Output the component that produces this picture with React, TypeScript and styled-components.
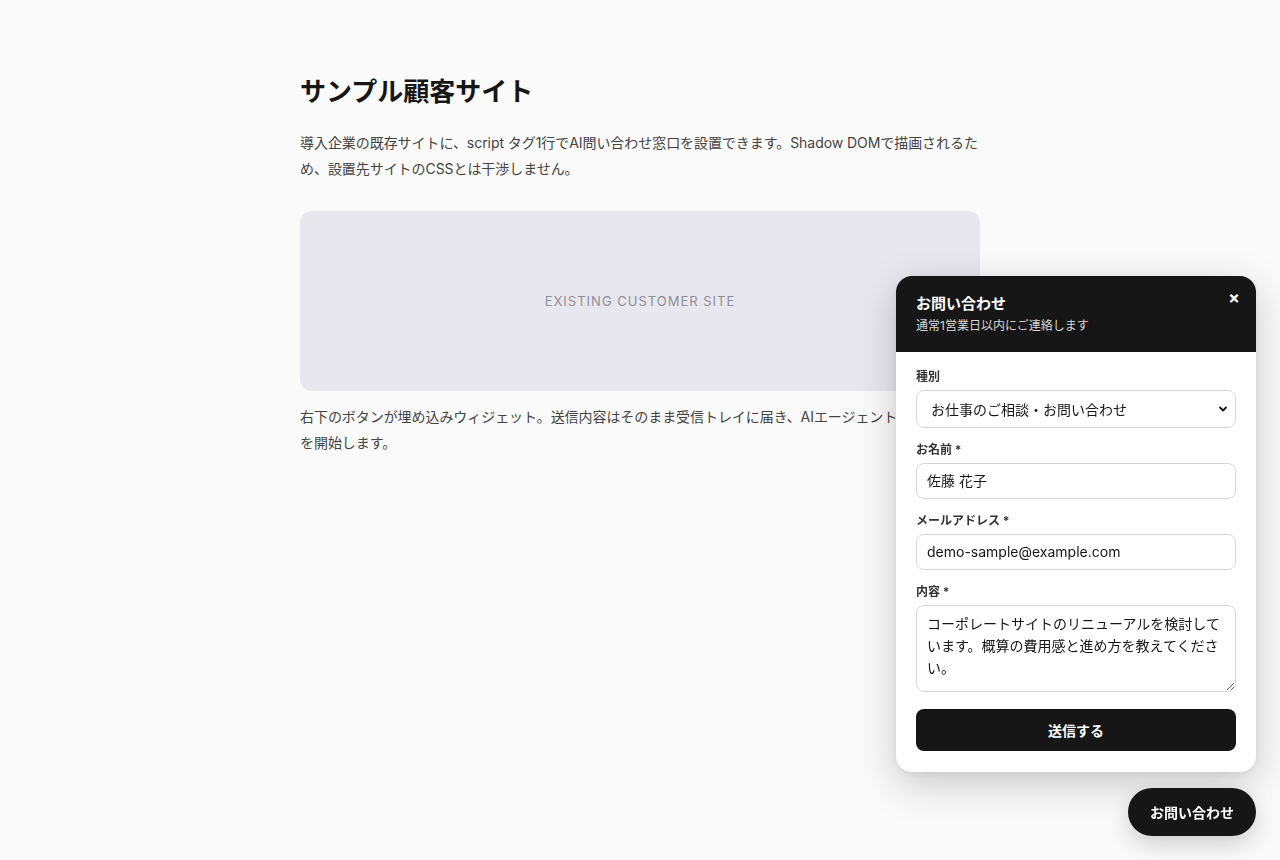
import React from 'react';
import styled, { createGlobalStyle } from 'styled-components';

const GlobalStyle = createGlobalStyle`
  html, body {
    margin: 0;
    padding: 0;
    background: #fafafa;
  }
  body {
    font-family: Inter, "Noto Sans CJK JP", sans-serif;
    color: #161616;
    -webkit-font-smoothing: antialiased;
  }
  * {
    box-sizing: border-box;
  }
`;

const Page = styled.main`
  width: 680px;
  margin: 0 auto;
  padding-top: 75px;
`;

const Title = styled.h1`
  margin: 0;
  font-size: 26px;
  line-height: 34px;
  font-weight: 700;
  color: #161616;
`;

const Lead = styled.p<{ gap: number }>`
  margin: ${(p) => p.gap}px 0 0;
  font-size: 14px;
  line-height: 26px;
  letter-spacing: -0.06px;
  color: #444;
`;

const Placeholder = styled.div`
  margin-top: 29px;
  height: 180px;
  border-radius: 12px;
  background: #e8e7ed;
  display: flex;
  align-items: center;
  justify-content: center;
  font-size: 13px;
  letter-spacing: 1px;
  color: #8f8f99;
`;

const Widget = styled.div`
  position: fixed;
  right: 24px;
  bottom: 24px;
  display: flex;
  flex-direction: column;
  align-items: flex-end;
  gap: 16px;
`;

const Panel = styled.section`
  width: 360px;
  border-radius: 16px;
  background: #fff;
  overflow: hidden;
  box-shadow: 0 12px 40px rgba(0, 0, 0, 0.2), 0 2px 8px rgba(0, 0, 0, 0.06);
`;

const Header = styled.header`
  position: relative;
  height: 76px;
  padding: 18px 20px 0;
  background: #161616;
  color: #fff;
`;

const HeaderTitle = styled.div`
  font-size: 15px;
  line-height: 20px;
  font-weight: 700;
`;

const HeaderSub = styled.div`
  margin-top: 4px;
  font-size: 12px;
  line-height: 16px;
  color: #d6d6d6;
`;

const CloseButton = styled.button`
  position: absolute;
  top: 13px;
  right: 14px;
  width: 16px;
  height: 18px;
  padding: 0;
  border: none;
  background: none;
  color: #fff;
  font-family: Inter, sans-serif;
  font-size: 17px;
  font-weight: 700;
  line-height: 18px;
  cursor: pointer;
`;

const Form = styled.form`
  display: flex;
  flex-direction: column;
  gap: 14px;
  padding: 17px 20px 21px;
`;

const Field = styled.label`
  display: flex;
  flex-direction: column;
  gap: 5px;
`;

const FieldLabel = styled.span`
  font-size: 12px;
  line-height: 16px;
  font-weight: 700;
  color: #333;
`;

const controlBase = `
  width: 100%;
  border: 1px solid #d6d6d6;
  border-radius: 8px;
  background: #fff;
  font-family: Inter, "Noto Sans CJK JP", sans-serif;
  font-size: 14px;
  color: #161616;
  outline: none;
`;

const SelectWrap = styled.div`
  position: relative;

  svg {
    position: absolute;
    right: 8px;
    top: 14px;
    pointer-events: none;
  }
`;

const Select = styled.select`
  ${controlBase}
  appearance: none;
  height: 38px;
  padding: 0 30px 0 14px;
`;

const Input = styled.input`
  ${controlBase}
  height: 36px;
  padding: 0 10px 2px;
`;

const TextArea = styled.textarea`
  ${controlBase}
  height: 87px;
  padding: 7px 10px;
  line-height: 22px;
  resize: vertical;
`;

const Submit = styled.button`
  margin-top: 3px;
  height: 42px;
  border: none;
  border-radius: 8px;
  background: #161616;
  color: #fff;
  font-family: Inter, "Noto Sans CJK JP", sans-serif;
  font-size: 14px;
  font-weight: 700;
  cursor: pointer;
`;

const Launcher = styled.button`
  height: 48px;
  padding: 0 22px;
  border: none;
  border-radius: 24px;
  background: #161616;
  color: #fff;
  font-family: Inter, "Noto Sans CJK JP", sans-serif;
  font-size: 14px;
  font-weight: 700;
  box-shadow: 0 8px 24px rgba(0, 0, 0, 0.18);
  cursor: pointer;
`;

function Chevron() {
  return (
    <svg width="10" height="10" viewBox="0 0 10 10" fill="none">
      <path d="M2 3.5 5 6.5 8 3.5" stroke="#161616" strokeWidth="1.8" strokeLinecap="round" strokeLinejoin="round" />
    </svg>
  );
}

export default function App() {
  return (
    <>
      <GlobalStyle />
      <Page>
        <Title>サンプル顧客サイト</Title>
        <Lead gap={21}>
          導入企業の既存サイトに、script タグ1行でAI問い合わせ窓口を設置できます。Shadow DOMで描画されるため、設置先サイトのCSSとは干渉しません。
        </Lead>
        <Placeholder>EXISTING CUSTOMER SITE</Placeholder>
        <Lead gap={13}>
          右下のボタンが埋め込みウィジェット。送信内容はそのまま受信トレイに届き、AIエージェントが一次対応を開始します。
        </Lead>
      </Page>

      <Widget>
        <Panel>
          <Header>
            <HeaderTitle>お問い合わせ</HeaderTitle>
            <HeaderSub>通常1営業日以内にご連絡します</HeaderSub>
            <CloseButton type="button" aria-label="閉じる">×</CloseButton>
          </Header>
          <Form onSubmit={(e) => e.preventDefault()}>
            <Field>
              <FieldLabel>種別</FieldLabel>
              <SelectWrap>
                <Select defaultValue="work">
                  <option value="work">お仕事のご相談・お問い合わせ</option>
                  <option value="other">その他</option>
                </Select>
                <Chevron />
              </SelectWrap>
            </Field>
            <Field>
              <FieldLabel>お名前 *</FieldLabel>
              <Input defaultValue="佐藤 花子" />
            </Field>
            <Field>
              <FieldLabel>メールアドレス *</FieldLabel>
              <Input type="email" defaultValue="demo-sample@example.com" />
            </Field>
            <Field>
              <FieldLabel>内容 *</FieldLabel>
              <TextArea defaultValue="コーポレートサイトのリニューアルを検討しています。概算の費用感と進め方を教えてください。" />
            </Field>
            <Submit type="submit">送信する</Submit>
          </Form>
        </Panel>
        <Launcher type="button">お問い合わせ</Launcher>
      </Widget>
    </>
  );
}
